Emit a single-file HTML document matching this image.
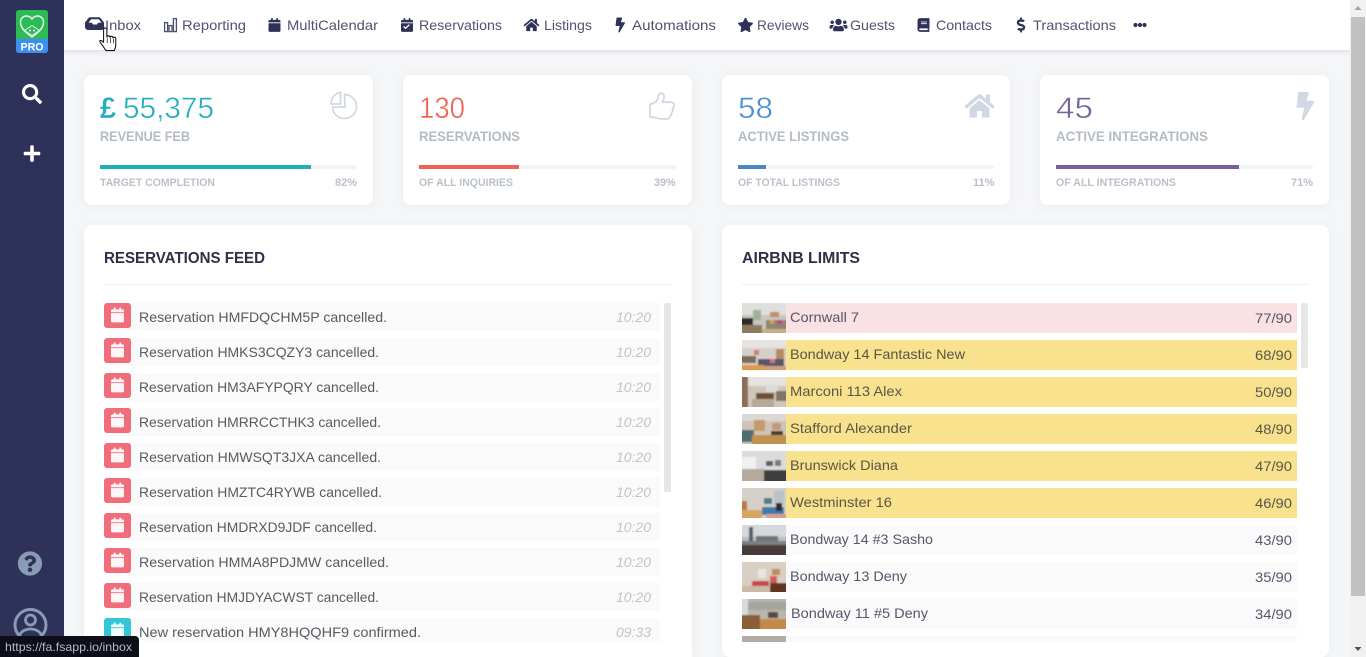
<!DOCTYPE html>
<html lang="en">
<head>
<meta charset="utf-8">
<title>Dashboard</title>
<style>
html,body{margin:0;padding:0;width:1366px;height:657px;overflow:hidden;background:#f5f6f8}
svg{display:block}
text{font-family:"Liberation Sans",sans-serif}
.nav{font-size:14px;fill:#50536f}
.num{font-size:30px;stroke:#fff;stroke-width:.45px}
.lab{font-size:14px;font-weight:700;fill:#b4bbc4}
.sm{font-size:11px;font-weight:700;fill:#bbc1c9}
.ttl{font-size:16px;font-weight:700;fill:#2d3047}
.feed{font-size:14px;fill:#585b62}
.time{font-size:14px;font-style:italic;fill:#c2c4c8}
.name{font-size:14px;fill:#55576a}
.name2{font-size:14px;fill:#5a5648}
.card{filter:drop-shadow(0 1px 5px rgba(40,50,80,.05))}
</style>
</head>
<body>
<svg width="1366" height="657" viewBox="0 0 1366 657" xmlns="http://www.w3.org/2000/svg">
<defs>
<linearGradient id="tb" x1="0" y1="0" x2="0" y2="1"><stop offset="0" stop-color="#e4e5e8"/><stop offset="1" stop-color="#f5f6f8"/></linearGradient>
<clipPath id="fc"><rect x="84" y="296" width="600" height="345.5"/></clipPath>
<clipPath id="lc"><rect x="730" y="296" width="590" height="346"/></clipPath>
<clipPath id="th"><rect width="44" height="30"/></clipPath>
<filter id="bl" x="0" y="0" width="100%" height="100%"><feGaussianBlur stdDeviation=".9"/></filter>
<symbol id="cal" viewBox="0 0 448 512"><path d="M12 192h424c6.600 0 12 5.400 12 12v260c0 26.500-21.500 48-48 48H48c-26.500 0-48-21.500-48-48V204c0-6.600 5.400-12 12-12zm436-44v-36c0-26.500-21.500-48-48-48h-48V12c0-6.600-5.400-12-12-12h-40c-6.600 0-12 5.400-12 12v52H160V12c0-6.600-5.400-12-12-12h-40c-6.600 0-12 5.400-12 12v52H48C21.500 64 0 85.500 0 112v36c0 6.600 5.400 12 12 12h424c6.600 0 12-5.400 12-12z"/></symbol>
<symbol id="home" viewBox="0 0 576 512"><path d="M280.370 148.260L96 300.110V464a16 16 0 0 0 16 16l112.060-.29a16 16 0 0 0 15.920-16V368a16 16 0 0 1 16-16h64a16 16 0 0 1 16 16v95.640a16 16 0 0 0 16 16.050L464 480a16 16 0 0 0 16-16V300L295.670 148.260a12.190 12.190 0 0 0-15.300 0zM571.600 251.470L488 182.560V44.050a12 12 0 0 0-12-12h-56a12 12 0 0 0-12 12v72.610L318.470 43a48 48 0 0 0-61 0L4.340 251.470a12 12 0 0 0-1.600 16.900l25.500 31A12 12 0 0 0 45.150 301l235.220-193.740a12.190 12.190 0 0 1 15.300 0L530.900 301a12 12 0 0 0 16.900-1.600l25.500-31a12 12 0 0 0-1.700-16.930z"/></symbol>
<symbol id="bolt" viewBox="0 0 320 512"><path d="M296 160H180.600l42.600-129.800C227.200 15 215.700 0 200 0H56C44 0 33.800 8.900 32.200 20.800l-32 240C-1.700 275.200 9.500 288 24 288h118.700L96.600 482.500c-3.600 15.200 8 29.500 23.300 29.500 8.400 0 16.400-4.400 20.800-12l176-304c9.300-15.900-2.200-36-20.700-36z"/></symbol>
</defs>

<!-- page background -->
<rect width="1366" height="657" fill="#f5f6f8"/>

<!-- sidebar -->
<rect x="0" y="0" width="64" height="657" fill="#2f3258"/>
<!-- logo -->
<rect x="16" y="10" width="32" height="43" rx="3" fill="#2dbb55"/>
<path d="M16 39h32v11a3 3 0 0 1-3 3H19a3 3 0 0 1-3-3z" fill="#3c8ff0"/>
<path d="M32 37C27 33 20.500 29 20.500 22C20.500 18 23.500 16 26.500 16C29 16 31 17.500 32 19C33 17.500 35 16 37.500 16C40.500 16 43.500 18 43.500 22C43.500 29 37 33 32 37Z" fill="none" stroke="#e8f7ec" stroke-width="1.500"/>
<path d="M24.500 30.500L32 25.500L39.500 30.500L32 35.500Z" fill="#2dbb55" stroke="#e8f7ec" stroke-width="1"/>
<circle cx="30" cy="30.500" r="1" fill="#fff"/><circle cx="34" cy="30.500" r="1" fill="#fff"/>
<text x="20.500" y="50.500" font-size="11" font-weight="700" fill="#fff" textLength="23" lengthAdjust="spacingAndGlyphs">PRO</text>
<!-- search -->
<svg x="22" y="84" width="20" height="20" viewBox="0 0 512 512" fill="#fff"><path d="M505 442.700L405.300 343c-4.500-4.500-10.600-7-17-7H372c27.600-35.300 44-79.700 44-128C416 93.100 322.900 0 208 0S0 93.100 0 208s93.100 208 208 208c48.300 0 92.700-16.400 128-44v16.300c0 6.400 2.500 12.500 7 17l99.700 99.700c9.400 9.400 24.600 9.400 33.900 0l28.300-28.300c9.400-9.400 9.400-24.600.1-34zM208 336c-70.700 0-128-57.200-128-128 0-70.700 57.200-128 128-128 70.700 0 128 57.200 128 128 0 70.700-57.200 128-128 128z"/></svg>
<!-- plus -->
<svg x="23" y="144" width="18" height="19" viewBox="0 0 448 512" fill="#fff"><path d="M416 208H272V64c0-17.670-14.330-32-32-32h-32c-17.670 0-32 14.330-32 32v144H32c-17.670 0-32 14.330-32 32v32c0 17.670 14.330 32 32 32h144v144c0 17.670 14.330 32 32 32h32c17.670 0 32-14.330 32-32V304h144c17.670 0 32-14.330 32-32v-32c0-17.670-14.330-32-32-32z"/></svg>
<!-- help -->
<svg x="17.500" y="551" width="25" height="25" viewBox="0 0 512 512" fill="#8a9bb4"><path d="M504 256c0 136.997-111.043 248-248 248S8 392.997 8 256C8 119.083 119.043 8 256 8s248 111.083 248 248zM262.655 90c-54.497 0-89.255 22.957-116.549 63.758-3.536 5.286-2.353 12.415 2.715 16.258l34.699 26.310c5.205 3.947 12.621 3.008 16.665-2.122 17.864-22.658 30.113-35.797 57.303-35.797 20.429 0 45.698 13.148 45.698 32.958 0 14.976-12.363 22.667-32.534 33.976C247.128 238.528 216 254.941 216 296v4c0 6.627 5.373 12 12 12h56c6.627 0 12-5.373 12-12v-1.333c0-28.462 83.186-29.647 83.186-106.667 0-58.002-60.165-102-116.531-102zM256 338c-25.365 0-46 20.635-46 46 0 25.364 20.635 46 46 46s46-20.636 46-46c0-25.365-20.635-46-46-46z"/></svg>
<!-- user -->
<circle cx="30.500" cy="625" r="15.500" fill="none" stroke="#8a9bb4" stroke-width="3"/>
<circle cx="30.500" cy="620" r="5" fill="none" stroke="#8a9bb4" stroke-width="2.800"/>
<path d="M19 636c2-5 7-7 11.500-7s9.500 2 11.500 7" fill="none" stroke="#8a9bb4" stroke-width="2.800"/>

<!-- stat cards -->
<g fill="#fff" class="card">
<rect x="84" y="75" width="289" height="130" rx="8"/>
<rect x="403" y="75" width="289" height="130" rx="8"/>
<rect x="722" y="75" width="288" height="130" rx="8"/>
<rect x="1040" y="75" width="289" height="130" rx="8"/>
<rect x="84" y="225" width="608" height="440" rx="8"/>
<rect x="722" y="225" width="607" height="432" rx="8"/>
</g>

<!-- top bar -->
<rect x="64" y="50" width="1286" height="6" fill="url(#tb)"/>
<rect x="64" y="0" width="1286" height="50" fill="#fff"/>

<!-- nav icons -->
<g fill="#2f3258">
<path d="M85 26v-3.500l3.500-4.500a2 2 0 0 1 1.500-.8h9a2 2 0 0 1 1.500.8l3.500 4.500V26a3 3 0 0 1-1 3.500c-.5.300-1 .5-1.500.5H88a3 3 0 0 1-3-3zM88.500 22.800h3.500l1 1.700h4l1-1.700h3.500l-2.600-3.600h-7.800z" fill-rule="evenodd"/>
<g fill="none" stroke="#4b4e6d" stroke-width="1.300"><rect x="164.600" y="22.600" width="3" height="9"/><rect x="169" y="25.600" width="3" height="6"/><rect x="173.400" y="18.600" width="3" height="13"/></g>
<use href="#cal" x="268.500" y="18" width="12" height="14"/>
<use href="#cal" x="401" y="18" width="12" height="14"/>
<path d="M403.200 26.900l2.400 2.400 4.200-4.200-.9-.9-3.300 3.200-1.500-1.400z" fill="#fff"/>
<use href="#home" x="523.500" y="18" width="16" height="14"/>
<use href="#bolt" x="615.500" y="17.500" width="9.500" height="15"/>
<svg x="737.500" y="17.500" width="16" height="15" viewBox="0 0 576 512"><path d="M259.300 17.800L194 150.200 47.900 171.500c-26.200 3.800-36.700 36.100-17.700 54.600l105.700 103-25 145.500c-4.500 26.300 23.200 46 46.400 33.700L288 439.600l130.700 68.700c23.200 12.200 50.900-7.400 46.400-33.700l-25-145.500 105.700-103c19-18.500 8.500-50.800-17.700-54.600L382 150.200 316.700 17.800c-11.700-23.600-45.600-23.900-57.400 0z"/></svg>
<svg x="829.500" y="17.500" width="18" height="15" viewBox="0 0 640 512"><path d="M96 224c35.300 0 64-28.700 64-64s-28.700-64-64-64-64 28.700-64 64 28.700 64 64 64zm448 0c35.300 0 64-28.700 64-64s-28.700-64-64-64-64 28.700-64 64 28.700 64 64 64zm32 32h-64c-17.600 0-33.500 7.100-45.100 18.600 40.300 22.100 68.900 62 75.100 109.400h66c17.700 0 32-14.300 32-32v-32c0-35.300-28.700-64-64-64zm-256 0c61.900 0 112-50.100 112-112S381.900 32 320 32 208 82.100 208 144s50.100 112 112 112zm76.800 32h-8.300c-20.800 10-43.900 16-68.500 16s-47.600-6-68.500-16h-8.300C179.600 288 128 339.600 128 403.200V432c0 26.500 21.500 48 48 48h288c26.500 0 48-21.500 48-48v-28.800c0-63.600-51.600-115.200-115.200-115.200zm-223.700-13.400C161.500 263.100 145.600 256 128 256H64c-35.300 0-64 28.700-64 64v32c0 17.700 14.300 32 32 32h65.900c6.300-47.400 34.900-87.300 75.200-109.400z"/></svg>
<svg x="917.500" y="18" width="12" height="14" viewBox="0 0 448 512"><path d="M448 360V24c0-13.300-10.700-24-24-24H96C43 0 0 43 0 96v320c0 53 43 96 96 96h328c13.300 0 24-10.700 24-24v-16c0-7.500-3.500-14.300-8.900-18.700-4.200-15.400-4.200-59.300 0-74.700 5.400-4.300 8.900-11.100 8.900-18.600zM128 134c0-3.300 2.700-6 6-6h212c3.300 0 6 2.700 6 6v20c0 3.300-2.700 6-6 6H134c-3.300 0-6-2.700-6-6v-20zm0 64c0-3.300 2.700-6 6-6h212c3.300 0 6 2.700 6 6v20c0 3.300-2.700 6-6 6H134c-3.300 0-6-2.700-6-6v-20zm253.400 250H96c-17.700 0-32-14.300-32-32 0-17.600 14.400-32 32-32h285.400c-1.900 17.100-1.900 46.900 0 64z"/></svg>
<svg x="1016.500" y="17.500" width="9" height="15" viewBox="0 0 288 512"><path d="M209.200 233.400l-108-31.600C88.700 198.200 80 186.500 80 173.500c0-16.300 13.200-29.500 29.500-29.500h66.300c12.200 0 24.200 3.700 34.200 10.500 6.100 4.100 14.300 3.100 19.500-2l34.800-34c7.100-6.900 6.100-18.400-1.800-24.500C238 74.800 207.400 64.100 176 64V16c0-8.800-7.200-16-16-16h-32c-8.800 0-16 7.200-16 16v48h-2.500C45.800 64-5.400 118.700.5 183.600c4.200 46.100 39.400 83.600 83.800 96.600l102.500 30c12.500 3.700 21.200 15.300 21.200 28.300 0 16.300-13.200 29.500-29.500 29.500h-66.300C100 368 88 364.300 78 357.500c-6.100-4.100-14.300-3.100-19.500 2l-34.800 34c-7.100 6.900-6.100 18.400 1.800 24.500 24.500 19.200 55.100 29.900 86.500 30v48c0 8.800 7.200 16 16 16h32c8.800 0 16-7.200 16-16v-48.200c46.600-.9 90.300-28.600 105.700-72.700 21.500-61.600-14.600-124.800-72.500-141.700z"/></svg>
<circle cx="1135.500" cy="25" r="2.100"/><circle cx="1140" cy="25" r="2.100"/><circle cx="1144.500" cy="25" r="2.100"/>
</g>

<!-- nav labels -->
<g class="nav">
<text class="nav" x="105" y="30" textLength="36" lengthAdjust="spacingAndGlyphs">Inbox</text>
<text class="nav" x="182" y="30" textLength="64" lengthAdjust="spacingAndGlyphs">Reporting</text>
<text class="nav" x="287" y="30" textLength="91" lengthAdjust="spacingAndGlyphs">MultiCalendar</text>
<text class="nav" x="419" y="30" textLength="83" lengthAdjust="spacingAndGlyphs">Reservations</text>
<text class="nav" x="544" y="30" textLength="48" lengthAdjust="spacingAndGlyphs">Listings</text>
<text class="nav" x="632" y="30" textLength="84" lengthAdjust="spacingAndGlyphs">Automations</text>
<text class="nav" x="757" y="30" textLength="52" lengthAdjust="spacingAndGlyphs">Reviews</text>
<text class="nav" x="850" y="30" textLength="45" lengthAdjust="spacingAndGlyphs">Guests</text>
<text class="nav" x="936" y="30" textLength="56" lengthAdjust="spacingAndGlyphs">Contacts</text>
<text class="nav" x="1033" y="30" textLength="83" lengthAdjust="spacingAndGlyphs">Transactions</text>
</g>

<!-- hand cursor -->
<g transform="translate(-17.500,-5) scale(1.170)">
<path d="M105.500 47.500l-3-4.500c-.8-1.400-2.700-3-2.200-3.900.5-.8 2 0 3.200 1.400v-10.800c0-2 2.800-2 2.800 0v6.300c.2-1.500 2.600-1.500 2.700.2.300-1.300 2.500-1.200 2.600.5.500-1 2.300-.8 2.300.8v5c0 2-.7 3.500-1.200 5z" fill="#fff" stroke="#111" stroke-width=".9" stroke-linejoin="round"/>
<path d="M106.600 37v4M109.300 37v4M112 37.500v3.500" stroke="#111" stroke-width=".6" fill="none"/>
</g>

<!-- stat 1 -->
<text class="num" x="100" y="118" fill="#22b0bc" font-weight="700" style="stroke-width:.2px" textLength="16" lengthAdjust="spacingAndGlyphs">£</text>
<text class="num" x="123" y="118" fill="#22b0bc" textLength="91" lengthAdjust="spacingAndGlyphs">55,375</text>
<text class="lab" x="100" y="141" textLength="90" lengthAdjust="spacingAndGlyphs">REVENUE FEB</text>
<rect x="100" y="165" width="257" height="4" rx="2" fill="#f2f3f5"/><rect x="100" y="165" width="211" height="4" fill="#20aeb9"/>
<text class="sm" x="100" y="186" textLength="115" lengthAdjust="spacingAndGlyphs">TARGET COMPLETION</text>
<text class="sm" x="335" y="186" textLength="22" lengthAdjust="spacingAndGlyphs">82%</text>
<g fill="none" stroke="#d0d9e3" stroke-width="1.700">
<path d="M344.500 94.500a12 12 0 1 1-12 12.500h12.500z" />
<path d="M340.500 92.500v11.500h-9.500a11 11 0 0 1 9.500-11.500z"/>
</g>
<!-- stat 2 -->
<text class="num" x="419" y="118" fill="#ef6250" textLength="46" lengthAdjust="spacingAndGlyphs">130</text>
<text class="lab" x="419" y="141" textLength="101" lengthAdjust="spacingAndGlyphs">RESERVATIONS</text>
<rect x="419" y="165" width="257" height="4" rx="2" fill="#f2f3f5"/><rect x="419" y="165" width="100" height="4" fill="#ee6352"/>
<text class="sm" x="419" y="186" textLength="94" lengthAdjust="spacingAndGlyphs">OF ALL INQUIRIES</text>
<text class="sm" x="654" y="186" textLength="21.500" lengthAdjust="spacingAndGlyphs">39%</text>
<path d="M650 105.500c0-1 .7-1.700 1.800-1.700 2 0 5-2 6-5 .7-2.200 1-5.800 3.300-5.800 2.800 0 3.400 3 2.700 5.500-.3 1.300-1 2.600-1.500 3.700h8.700c2.200 0 3.300 1.700 3.300 3.200 0 1.300-.8 2.400-1.600 2.900.5 1.600.1 3.100-1 4 .2 1.500-.3 2.800-1.400 3.500-.1 1.700-1.400 3.200-3.800 3.200h-4c-4 0-6.500-1.500-8-1.700h-2.800c-1 0-1.700-.7-1.700-1.700z" fill="none" stroke="#d0d9e3" stroke-width="1.800" stroke-linejoin="round"/>
<!-- stat 3 -->
<text class="num" x="738" y="118" fill="#4a90d5" textLength="35" lengthAdjust="spacingAndGlyphs">58</text>
<text class="lab" x="738" y="141" textLength="111" lengthAdjust="spacingAndGlyphs">ACTIVE LISTINGS</text>
<rect x="738" y="165" width="256.500" height="4" rx="2" fill="#f2f3f5"/><rect x="738" y="165" width="28" height="4" fill="#4a87c9"/>
<text class="sm" x="738" y="186" textLength="102" lengthAdjust="spacingAndGlyphs">OF TOTAL LISTINGS</text>
<text class="sm" x="973" y="186" textLength="21.500" lengthAdjust="spacingAndGlyphs">11%</text>
<use href="#home" x="964.500" y="91" width="30" height="30" fill="#d0d9e3"/>
<!-- stat 4 -->
<text class="num" x="1056" y="118" fill="#75659c" textLength="37" lengthAdjust="spacingAndGlyphs">45</text>
<text class="lab" x="1056" y="141" textLength="152" lengthAdjust="spacingAndGlyphs">ACTIVE INTEGRATIONS</text>
<rect x="1056" y="165" width="257" height="4" rx="2" fill="#f2f3f5"/><rect x="1056" y="165" width="183" height="4" fill="#7a5ea2"/>
<text class="sm" x="1056" y="186" textLength="120" lengthAdjust="spacingAndGlyphs">OF ALL INTEGRATIONS</text>
<text class="sm" x="1291" y="186" textLength="22" lengthAdjust="spacingAndGlyphs">71%</text>
<svg x="1296.500" y="92" width="17.500" height="28" viewBox="0 0 320 512" fill="#d0d9e3" preserveAspectRatio="none"><path d="M296 160H180.600l42.600-129.800C227.200 15 215.700 0 200 0H56C44 0 33.800 8.900 32.200 20.800l-32 240C-1.700 275.200 9.500 288 24 288h118.700L96.600 482.500c-3.600 15.200 8 29.500 23.300 29.500 8.400 0 16.400-4.400 20.800-12l176-304c9.300-15.900-2.200-36-20.700-36z"/></svg>

<!-- Reservations feed -->
<text class="ttl" x="104" y="263" textLength="161" lengthAdjust="spacingAndGlyphs">RESERVATIONS FEED</text>
<rect x="104" y="284" width="568" height="1" fill="#eeeff1"/>
<rect x="664" y="303" width="7" height="189" rx="2" fill="#e6e6e6"/>
<g clip-path="url(#fc)">
<g fill="#fafafa">
<rect x="110" y="303" width="550" height="28"/><rect x="110" y="338" width="550" height="28"/><rect x="110" y="373" width="550" height="28"/><rect x="110" y="408" width="550" height="28"/><rect x="110" y="443" width="550" height="28"/><rect x="110" y="478" width="550" height="28"/><rect x="110" y="513" width="550" height="28"/><rect x="110" y="548" width="550" height="28"/><rect x="110" y="583" width="550" height="28"/><rect x="110" y="618" width="550" height="28"/>
</g>
<g fill="#f06e7b">
<rect x="104" y="303" width="27" height="25" rx="3"/><rect x="104" y="338" width="27" height="25" rx="3"/><rect x="104" y="373" width="27" height="25" rx="3"/><rect x="104" y="408" width="27" height="25" rx="3"/><rect x="104" y="443" width="27" height="25" rx="3"/><rect x="104" y="478" width="27" height="25" rx="3"/><rect x="104" y="513" width="27" height="25" rx="3"/><rect x="104" y="548" width="27" height="25" rx="3"/><rect x="104" y="583" width="27" height="25" rx="3"/>
</g>
<rect x="104" y="618" width="27" height="25" rx="3" fill="#33c6d6"/>
<g fill="#fff" fill-opacity=".93">
<use href="#cal" x="111" y="307" width="13" height="16"/><use href="#cal" x="111" y="342" width="13" height="16"/><use href="#cal" x="111" y="377" width="13" height="16"/><use href="#cal" x="111" y="412" width="13" height="16"/><use href="#cal" x="111" y="447" width="13" height="16"/><use href="#cal" x="111" y="482" width="13" height="16"/><use href="#cal" x="111" y="517" width="13" height="16"/><use href="#cal" x="111" y="552" width="13" height="16"/><use href="#cal" x="111" y="587" width="13" height="16"/><use href="#cal" x="111" y="622" width="13" height="16"/>
</g>
<text class="feed" x="139" y="322" textLength="248" lengthAdjust="spacingAndGlyphs">Reservation HMFDQCHM5P cancelled.</text>
<text class="feed" x="139" y="357" textLength="240" lengthAdjust="spacingAndGlyphs">Reservation HMKS3CQZY3 cancelled.</text>
<text class="feed" x="139" y="392" textLength="240" lengthAdjust="spacingAndGlyphs">Reservation HM3AFYPQRY cancelled.</text>
<text class="feed" x="139" y="427" textLength="242" lengthAdjust="spacingAndGlyphs">Reservation HMRRCCTHK3 cancelled.</text>
<text class="feed" x="139" y="462" textLength="242" lengthAdjust="spacingAndGlyphs">Reservation HMWSQT3JXA cancelled.</text>
<text class="feed" x="139" y="497" textLength="243" lengthAdjust="spacingAndGlyphs">Reservation HMZTC4RYWB cancelled.</text>
<text class="feed" x="139" y="532" textLength="238" lengthAdjust="spacingAndGlyphs">Reservation HMDRXD9JDF cancelled.</text>
<text class="feed" x="139" y="567" textLength="250" lengthAdjust="spacingAndGlyphs">Reservation HMMA8PDJMW cancelled.</text>
<text class="feed" x="139" y="602" textLength="240" lengthAdjust="spacingAndGlyphs">Reservation HMJDYACWST cancelled.</text>
<text class="feed" x="139" y="637" textLength="282" lengthAdjust="spacingAndGlyphs">New reservation HMY8HQQHF9 confirmed.</text>
<text class="time" x="616" y="322" textLength="35" lengthAdjust="spacingAndGlyphs">10:20</text>
<text class="time" x="616" y="357" textLength="35" lengthAdjust="spacingAndGlyphs">10:20</text>
<text class="time" x="616" y="392" textLength="35" lengthAdjust="spacingAndGlyphs">10:20</text>
<text class="time" x="616" y="427" textLength="35" lengthAdjust="spacingAndGlyphs">10:20</text>
<text class="time" x="616" y="462" textLength="35" lengthAdjust="spacingAndGlyphs">10:20</text>
<text class="time" x="616" y="497" textLength="35" lengthAdjust="spacingAndGlyphs">10:20</text>
<text class="time" x="616" y="532" textLength="35" lengthAdjust="spacingAndGlyphs">10:20</text>
<text class="time" x="616" y="567" textLength="35" lengthAdjust="spacingAndGlyphs">10:20</text>
<text class="time" x="616" y="602" textLength="35" lengthAdjust="spacingAndGlyphs">10:20</text>
<text class="time" x="616" y="637" textLength="35" lengthAdjust="spacingAndGlyphs">09:33</text>
</g>

<!-- Airbnb limits -->
<text class="ttl" x="742" y="263" textLength="118" lengthAdjust="spacingAndGlyphs">AIRBNB LIMITS</text>
<rect x="742" y="284" width="566" height="1" fill="#eeeff1"/>
<rect x="1301" y="303" width="7" height="65" rx="2" fill="#e6e6e6"/>
<g clip-path="url(#lc)">
<rect x="742" y="303" width="555" height="30" fill="#fae1e3"/>
<g fill="#f8e28e">
<rect x="742" y="340" width="555" height="30"/><rect x="742" y="377" width="555" height="30"/><rect x="742" y="414" width="555" height="30"/><rect x="742" y="451" width="555" height="30"/><rect x="742" y="488" width="555" height="30"/>
</g>
<g fill="#fafafa">
<rect x="742" y="525" width="555" height="30"/><rect x="742" y="562" width="555" height="30"/><rect x="742" y="599" width="555" height="30"/><rect x="742" y="636" width="555" height="30"/>
</g>

<!-- thumbnails -->
<g transform="translate(742,303)" clip-path="url(#th)"><rect width="44" height="30" fill="#c9c6c0"/><g filter="url(#bl)"><rect x="-3" y="-3" width="50" height="36" fill="#c9c6c0"/><rect x="-3" y="-3" width="50" height="15" fill="#dfdfdc"/><rect x="11" y="7" width="8" height="10" fill="#9fb09a"/><rect x="28" y="9" width="9" height="5" fill="#c58b6e"/><rect x="-3" y="15" width="14" height="7" fill="#2e2b29"/><rect x="-3" y="22" width="23" height="11" fill="#8f7a60"/><rect x="24" y="17" width="23" height="9" fill="#8e8577"/><rect x="28" y="17" width="4" height="4" fill="#d4a33a"/><rect x="35" y="17" width="5" height="4" fill="#c2456a"/><rect x="20" y="26" width="27" height="7" fill="#c6ae8c"/></g></g>
<g transform="translate(742,340)" clip-path="url(#th)"><rect width="44" height="30" fill="#d8cfc9"/><g filter="url(#bl)"><rect x="-3" y="-3" width="50" height="36" fill="#d8cfc9"/><rect x="-3" y="-3" width="50" height="11" fill="#e6e3e1"/><rect x="34" y="9" width="8" height="13" fill="#b88a60"/><rect x="12" y="10" width="5" height="5" fill="#c87f72"/><rect x="-3" y="16" width="17" height="7" fill="#7c6a5a"/><rect x="16" y="19" width="26" height="7" fill="#54566a"/><rect x="28" y="19" width="5" height="4" fill="#d2728a"/><rect x="-3" y="25" width="25" height="8" fill="#e09a48"/><rect x="22" y="26" width="25" height="7" fill="#cda07a"/></g></g>
<g transform="translate(742,377)" clip-path="url(#th)"><rect width="44" height="30" fill="#cfc6ba"/><g filter="url(#bl)"><rect x="-3" y="-3" width="50" height="36" fill="#cfc6ba"/><rect x="-3" y="-3" width="50" height="12" fill="#e4e3df"/><rect x="-3" y="-3" width="9" height="36" fill="#8c6e58"/><rect x="24" y="8" width="12" height="7" fill="#dcdbd6"/><rect x="14" y="16" width="18" height="6" fill="#6e4f38"/><rect x="34" y="14" width="13" height="10" fill="#7f7466"/><rect x="10" y="22" width="22" height="11" fill="#b7a898"/></g></g>
<g transform="translate(742,414)" clip-path="url(#th)"><rect width="44" height="30" fill="#cfc4ba"/><g filter="url(#bl)"><rect x="-3" y="-3" width="50" height="36" fill="#cfc4ba"/><rect x="-3" y="-3" width="50" height="10" fill="#dcd8d4"/><rect x="12" y="6" width="11" height="11" fill="#c79a6c"/><rect x="30" y="9" width="9" height="7" fill="#c1997c"/><rect x="-3" y="16" width="15" height="12" fill="#4f6e72"/><rect x="29" y="17" width="12" height="7" fill="#473a34"/><rect x="10" y="21" width="37" height="12" fill="#bf924e"/></g></g>
<g transform="translate(742,451)" clip-path="url(#th)"><rect width="44" height="30" fill="#dadcde"/><g filter="url(#bl)"><rect x="-3" y="-3" width="50" height="36" fill="#dadcde"/><rect x="-3" y="6" width="17" height="12" fill="#eef0f2"/><rect x="24" y="10" width="7" height="5" fill="#5c5c5c"/><rect x="33" y="9" width="6" height="6" fill="#807a74"/><rect x="-3" y="18" width="25" height="15" fill="#b4a99c"/><rect x="22" y="19" width="25" height="14" fill="#3f3c3c"/></g></g>
<g transform="translate(742,488)" clip-path="url(#th)"><rect width="44" height="30" fill="#d5d0c9"/><g filter="url(#bl)"><rect x="-3" y="-3" width="50" height="36" fill="#d5d0c9"/><rect x="32" y="3" width="10" height="14" fill="#b6c2cc"/><rect x="22" y="10" width="8" height="6" fill="#4f7f84"/><rect x="-3" y="13" width="8" height="13" fill="#c07a4c"/><rect x="-3" y="22" width="23" height="11" fill="#d7a760"/><rect x="20" y="19" width="22" height="8" fill="#3f78b0"/><rect x="34" y="15" width="6" height="8" fill="#2e2b2d"/><rect x="24" y="26" width="23" height="7" fill="#d7a08a"/></g></g>
<g transform="translate(742,525)" clip-path="url(#th)"><rect width="44" height="30" fill="#b8bdc2"/><g filter="url(#bl)"><rect x="-3" y="-3" width="50" height="36" fill="#b8bdc2"/><rect x="-3" y="-3" width="50" height="15" fill="#d5d8dc"/><rect x="7" y="2" width="4" height="14" fill="#566068"/><rect x="14" y="11" width="22" height="6" fill="#6e747a"/><rect x="-3" y="16" width="50" height="6" fill="#7d7f80"/><rect x="-3" y="20" width="50" height="13" fill="#473e38"/></g></g>
<g transform="translate(742,562)" clip-path="url(#th)"><rect width="44" height="30" fill="#d8cfc2"/><g filter="url(#bl)"><rect x="-3" y="-3" width="50" height="36" fill="#d8cfc2"/><rect x="16" y="7" width="8" height="9" fill="#e6e6e2"/><rect x="30" y="7" width="8" height="6" fill="#c08a60"/><rect x="10" y="19" width="17" height="7" fill="#c8464e"/><rect x="28" y="14" width="7" height="8" fill="#d65c5c"/><rect x="28" y="21" width="19" height="12" fill="#5e3524"/><rect x="-3" y="24" width="31" height="9" fill="#ccbaa4"/></g></g>
<g transform="translate(742,599)" clip-path="url(#th)"><rect width="44" height="30" fill="#b7b7b0"/><g filter="url(#bl)"><rect x="-3" y="-3" width="50" height="36" fill="#b7b7b0"/><rect x="-3" y="-3" width="9" height="21" fill="#d5dcdf"/><rect x="6" y="3" width="41" height="8" fill="#a6a59d"/><rect x="-3" y="16" width="21" height="17" fill="#8b5e34"/><rect x="18" y="20" width="29" height="13" fill="#c28a48"/><rect x="26" y="13" width="10" height="6" fill="#5c4a3c"/></g></g>
<g transform="translate(742,636)" clip-path="url(#th)"><rect width="44" height="30" fill="#b3aca4"/></g>

<text class="name" x="790" y="322" textLength="69" lengthAdjust="spacingAndGlyphs">Cornwall 7</text>
<text class="name2" x="790" y="359" textLength="175" lengthAdjust="spacingAndGlyphs">Bondway 14 Fantastic New</text>
<text class="name2" x="790" y="396" textLength="112" lengthAdjust="spacingAndGlyphs">Marconi 113 Alex</text>
<text class="name2" x="790" y="433" textLength="122" lengthAdjust="spacingAndGlyphs">Stafford Alexander</text>
<text class="name2" x="790" y="470" textLength="108" lengthAdjust="spacingAndGlyphs">Brunswick Diana</text>
<text class="name2" x="790" y="507" textLength="102" lengthAdjust="spacingAndGlyphs">Westminster 16</text>
<text class="name" x="790" y="544" textLength="143" lengthAdjust="spacingAndGlyphs">Bondway 14 #3 Sasho</text>
<text class="name" x="790" y="581" textLength="117" lengthAdjust="spacingAndGlyphs">Bondway 13 Deny</text>
<text class="name" x="791" y="618" textLength="137" lengthAdjust="spacingAndGlyphs">Bondway 11 #5 Deny</text>
<text class="name" x="1255" y="323" textLength="37" lengthAdjust="spacingAndGlyphs">77/90</text>
<text class="name2" x="1255" y="360" textLength="37" lengthAdjust="spacingAndGlyphs">68/90</text>
<text class="name2" x="1255" y="397" textLength="37" lengthAdjust="spacingAndGlyphs">50/90</text>
<text class="name2" x="1255" y="434" textLength="37" lengthAdjust="spacingAndGlyphs">48/90</text>
<text class="name2" x="1255" y="471" textLength="37" lengthAdjust="spacingAndGlyphs">47/90</text>
<text class="name2" x="1255" y="508" textLength="37" lengthAdjust="spacingAndGlyphs">46/90</text>
<text class="name" x="1255" y="545" textLength="37" lengthAdjust="spacingAndGlyphs">43/90</text>
<text class="name" x="1255" y="582" textLength="37" lengthAdjust="spacingAndGlyphs">35/90</text>
<text class="name" x="1255" y="619" textLength="37" lengthAdjust="spacingAndGlyphs">34/90</text>
</g>

<!-- page scrollbar -->
<rect x="1350" y="0" width="16" height="657" fill="#f1f1f1"/>
<rect x="1351" y="17" width="14" height="579" fill="#c1c1c1"/>
<path d="M1358 6l-3.500 4h7z" fill="#a3a3a3"/>
<path d="M1358 651l-3.500-4h7z" fill="#505050"/>

<!-- status tooltip -->
<path d="M0 636h135a4 4 0 0 1 4 4v17H0z" fill="#0c0e18"/>
<text x="5" y="651" font-size="12" fill="#b9bcc2" textLength="127" lengthAdjust="spacingAndGlyphs">https://fa.fsapp.io/inbox</text>
</svg>
</body>
</html>
